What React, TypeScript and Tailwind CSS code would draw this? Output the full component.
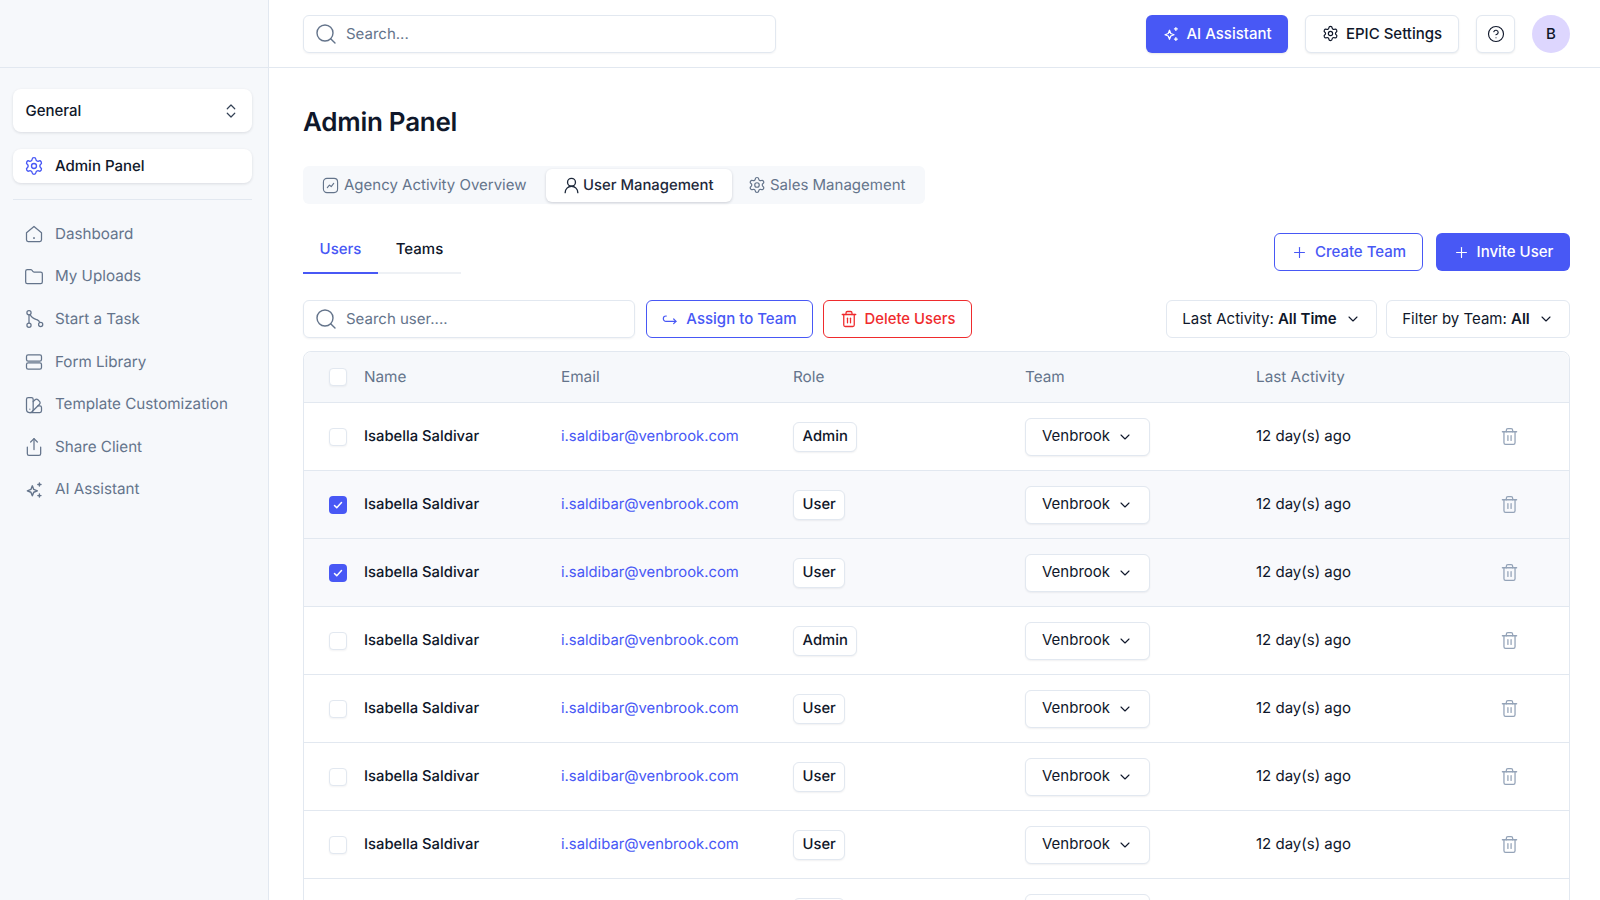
import React from "react";
import {
  ChevronDown,
  ChevronsUpDown,
  CircleHelp,
  Folder,
  Plus,
  Search,
  Settings,
  Share,
  SwatchBook,
  Trash2,
  UserRound,
} from "lucide-react";

type IconProps = { className?: string };

const Sparkle = ({ className }: IconProps) => (
  <svg className={className} viewBox="0 0 24 24" fill="none" stroke="currentColor" strokeWidth={1.7} strokeLinejoin="round" strokeLinecap="round">
    <path d="M10 7l1.700 4.300 4.300 1.700-4.300 1.700L10 19l-1.700-4.300L4 13l4.300-1.700z" />
    <path d="M18.500 3.500v3.700M16.600 5.300h3.800M18.500 16.800v3.700M16.600 18.700h3.800" />
  </svg>
);

const HomeIcon = ({ className }: IconProps) => (
  <svg className={className} viewBox="0 0 24 24" fill="none" stroke="currentColor" strokeWidth={1.5} strokeLinejoin="round" strokeLinecap="round">
    <path d="M3 10.500 12 3l9 7.500V19a2 2 0 0 1-2 2H5a2 2 0 0 1-2-2z" />
    <path d="M12 16.500v.5" strokeWidth={2} />
  </svg>
);

const TaskIcon = ({ className }: IconProps) => (
  <svg className={className} viewBox="0 0 24 24" fill="none" stroke="currentColor" strokeWidth={1.5} strokeLinecap="round">
    <circle cx="6" cy="4.500" r="2.500" />
    <circle cx="6" cy="19.500" r="2.500" />
    <circle cx="20" cy="18.500" r="2.500" />
    <path d="M6 7v10M7.500 7C9 11 13 12 15.500 12.800c1.500.6 2.800 1.700 3.300 3.300" />
  </svg>
);

const FormIcon = ({ className }: IconProps) => (
  <svg className={className} viewBox="0 0 24 24" fill="none" stroke="currentColor" strokeWidth={1.5} strokeLinejoin="round">
    <rect x="3" y="3.500" width="18" height="7.500" rx="2" />
    <rect x="3" y="13" width="18" height="7.500" rx="2" />
  </svg>
);

const ChartSquare = ({ className }: IconProps) => (
  <svg className={className} viewBox="0 0 24 24" fill="none" stroke="currentColor" strokeWidth={1.6} strokeLinecap="round" strokeLinejoin="round">
    <rect x="2" y="2" width="20" height="20" rx="5" />
    <path d="M7.500 15l3-3.500 2.500 2L16.500 9" />
  </svg>
);

const AssignIcon = ({ className }: IconProps) => (
  <svg className={className} viewBox="0 0 24 24" fill="none" stroke="currentColor" strokeWidth={1.8} strokeLinecap="round" strokeLinejoin="round">
    <path d="M6.500 7.500H6a3.500 3.500 0 0 0 0 8h15" />
    <path d="M17.500 12 21 15.500 17.500 19" />
  </svg>
);

const navItems = [
  { label: "Dashboard", icon: HomeIcon },
  { label: "My Uploads", icon: Folder },
  { label: "Start a Task", icon: TaskIcon },
  { label: "Form Library", icon: FormIcon },
  { label: "Template Customization", icon: SwatchBook },
  { label: "Share Client", icon: Share },
  { label: "AI Assistant", icon: Sparkle },
];

const users = [
  { role: "Admin", checked: false },
  { role: "User", checked: true },
  { role: "User", checked: true },
  { role: "Admin", checked: false },
  { role: "User", checked: false },
  { role: "User", checked: false },
  { role: "User", checked: false },
  { role: "User", checked: false },
];

const Checkbox = ({ checked }: { checked: boolean }) =>
  checked ? (
    <span className="flex h-[18px] w-[18px] items-center justify-center rounded-[4px] bg-[#4858f5]">
      <svg className="h-3 w-3 text-white" viewBox="0 0 24 24" fill="none" stroke="currentColor" strokeWidth={3} strokeLinecap="round" strokeLinejoin="round">
        <path d="M5 13l4.500 4.500L19 7" />
      </svg>
    </span>
  ) : (
    <span className="block h-[18px] w-[18px] rounded-[4px] border border-[#e2e8f0] bg-white shadow-[0_1px_2px_rgba(15,23,42,0.05)]" />
  );

const Sidebar = () => (
  <aside className="flex h-full w-[269px] shrink-0 flex-col border-r border-[#e2e8f0] bg-[#f6f8fb]">
    <div className="h-[68px] shrink-0 border-b border-[#e2e8f0]" />
    <div className="pl-[13px] pr-[16px] pt-[21px]">
      <button className="flex h-[43px] w-full items-center justify-between rounded-lg bg-white pl-[12.500px] pr-[12px] text-[15px] font-medium text-[#0f172a] shadow-[0_1px_3px_rgba(15,23,42,0.12)]">
        <span className="pt-[2px]">General</span>
        <ChevronsUpDown className="h-[18px] w-[18px] text-[#334155]" strokeWidth={1.6} />
      </button>
      <div className="mt-[17px] flex h-[34px] items-center gap-[11px] rounded-lg bg-white pl-[11px] text-[15px] font-medium text-[#0f172a] shadow-[0_1px_3px_rgba(15,23,42,0.12)]">
        <Settings className="h-[20px] w-[20px] text-[#4858f5]" strokeWidth={1.6} />
        Admin Panel
      </div>
      <div className="mt-4 border-t border-[#e2e8f0]" />
      <nav className="mt-[13px] flex flex-col">
        {navItems.map((item) => (
          <a key={item.label} className="flex h-[42.6px] items-center gap-[11px] pl-[11px] text-[15.2px] text-[#64748b]">
            <item.icon className="h-[20px] w-[20px] shrink-0" strokeWidth={1.5} />
            {item.label}
          </a>
        ))}
      </nav>
    </div>
  </aside>
);

const Header = () => (
  <header className="flex h-[68px] shrink-0 items-center justify-between border-b border-[#e2e8f0] pl-[34px] pr-[30px]">
    <div className="flex h-[38px] w-[473px] items-center gap-[8px] rounded-md border border-[#e2e8f0] pl-[10px] pr-[9px] text-[15px] text-[#64748b] shadow-[0_1px_2px_rgba(15,23,42,0.05)]">
      <Search className="h-[24px] w-[24px]" strokeWidth={1.4} />
      <span className="pt-[2px]">Search...</span>
    </div>
    <div className="flex items-center">
      <button className="flex h-[38px] w-[142px] items-center justify-center gap-[6px] rounded-md bg-[#4858f5] text-[15px] font-medium text-white shadow-[0_1px_2px_rgba(15,23,42,0.1)]">
        <Sparkle className="h-[18px] w-[18px]" />
        <span className="pt-[2px]">AI Assistant</span>
      </button>
      <button className="ml-[17px] flex h-[38px] w-[154px] items-center justify-center gap-[7px] rounded-md border border-[#e2e8f0] bg-white text-[15px] font-medium text-[#0f172a] shadow-[0_1px_2px_rgba(15,23,42,0.08)]">
        <Settings className="h-[17px] w-[17px]" strokeWidth={1.7} />
        <span className="pt-[2px]">EPIC Settings</span>
      </button>
      <button className="ml-[17px] flex h-[38px] w-[39px] items-center justify-center rounded-md border border-[#e2e8f0] bg-white text-[#0f172a] shadow-[0_1px_2px_rgba(15,23,42,0.08)]">
        <CircleHelp className="h-[18px] w-[18px]" strokeWidth={1.5} />
      </button>
      <div className="ml-[17px] flex h-[38px] w-[38px] items-center justify-center rounded-full bg-[#ddd6fe] pt-[2px] text-[15px] font-medium text-[#0f172a]">
        B
      </div>
    </div>
  </header>
);

const TopTabs = () => (
  <div className="mt-[27px] flex h-[38px] w-[622px] items-center gap-[3px] rounded-md bg-[#f6f8fb] px-[3px]">
    <div className="flex h-full w-[237px] flex-none items-center gap-[5px] pl-4 text-[15px] text-[#64748b]">
      <ChartSquare className="h-[17px] w-[17px]" />
      Agency Activity Overview
    </div>
    <div className="flex h-[33px] w-[186px] flex-none items-center gap-[2px] rounded-md bg-white pl-4 text-[14.85px] font-medium text-[#1e293b] shadow-[0_1px_3px_rgba(15,23,42,0.18)]">
      <UserRound className="h-[19px] w-[19px]" strokeWidth={1.7} />
      User Management
    </div>
    <div className="flex h-full flex-none items-center gap-[4px] pl-[13px] text-[15px] text-[#64748b]">
      <Settings className="h-[18px] w-[18px]" strokeWidth={1.6} />
      Sales Management
    </div>
  </div>
);

const Toolbar = () => (
  <>
    <div className="mt-[29px] flex items-start justify-between">
      <div className="flex w-[158px] border-b-2 border-[#eef1f5] text-[15px] font-medium">
        <div className="-mb-[2px] flex h-[41px] w-[75px] items-start justify-center border-b-2 border-[#4858f5] pt-[5px] text-[#4858f5]">Users</div>
        <div className="flex h-[39px] w-[83px] items-start justify-center pt-[5px] text-[#0f172a]">Teams</div>
      </div>
      <div className="flex gap-[13px]">
        <button className="flex h-[38px] w-[149px] items-center justify-center gap-[7px] rounded-md border border-[#4858f5] bg-white text-[15px] font-medium text-[#4858f5]">
          <Plus className="h-[17px] w-[17px]" strokeWidth={1.6} />
          Create Team
        </button>
        <button className="flex h-[38px] w-[134px] items-center justify-center gap-[7px] rounded-md bg-[#4858f5] text-[15px] font-medium text-white">
          <Plus className="h-[17px] w-[17px]" strokeWidth={1.6} />
          Invite User
        </button>
      </div>
    </div>
    <div className="mt-[26px] flex items-center justify-between">
      <div className="flex items-center">
        <div className="flex h-[38px] w-[332px] items-center gap-[8px] rounded-md border border-[#e2e8f0] pl-[10px] pr-[9px] text-[15px] text-[#64748b] shadow-[0_1px_2px_rgba(15,23,42,0.05)]">
          <Search className="h-[24px] w-[24px]" strokeWidth={1.4} />
          Search user....
        </div>
        <button className="ml-[11px] flex h-[38px] w-[167px] items-center justify-center gap-2 rounded-md border border-[#4858f5] bg-white text-[15px] font-medium text-[#4858f5]">
          <AssignIcon className="h-4 w-4" />
          Assign to Team
        </button>
        <button className="ml-[10px] flex h-[38px] w-[149px] items-center justify-center gap-[7px] rounded-md border border-[#ef2b2d] bg-white text-[14.85px] font-medium text-[#ef2b2d]">
          <Trash2 className="h-[18px] w-[18px]" strokeWidth={1.7} />
          Delete Users
        </button>
      </div>
      <div className="flex items-center gap-[9px]">
        <button className="flex h-[38px] w-[211px] items-center justify-center gap-[8px] rounded-md border border-[#e2e8f0] bg-white text-[15px] text-[#0f172a]">
          <span>
            Last Activity: <b className="font-semibold">All Time</b>
          </span>
          <ChevronDown className="h-4 w-4" strokeWidth={1.6} />
        </button>
        <button className="flex h-[38px] w-[184px] items-center justify-center gap-[8px] rounded-md border border-[#e2e8f0] bg-white text-[15px] text-[#0f172a]">
          <span>
            Filter by Team: <b className="font-semibold">All</b>
          </span>
          <ChevronDown className="h-4 w-4" strokeWidth={1.6} />
        </button>
      </div>
    </div>
  </>
);

const UserTable = () => (
  <div className="mt-[13px] rounded-t-lg border border-[#e2e8f0]">
    <div className="grid h-[50px] grid-cols-[60px_197px_232px_232px_231px_1fr] items-center rounded-t-lg bg-[#f6f8fb] text-[15.3px] text-[#64748b]">
      <div className="flex justify-center pl-[8px]">
        <Checkbox checked={false} />
      </div>
      <div>Name</div>
      <div>Email</div>
      <div>Role</div>
      <div>Team</div>
      <div>Last Activity</div>
    </div>
    {users.map((user, idx) => (
      <div
        key={idx}
        className={`grid h-[68px] grid-cols-[60px_197px_232px_232px_231px_1fr] items-center border-t border-[#e2e8f0] text-[15px] text-[#0f172a] ${
          user.checked ? "bg-[#f8f9fc]" : "bg-white"
        }`}
      >
        <div className="flex justify-center pl-[8px]">
          <Checkbox checked={user.checked} />
        </div>
        <div className="text-[14.8px] font-medium">Isabella Saldivar</div>
        <div className="text-[14.8px] text-[#4858f5]">i.saldibar@venbrook.com</div>
        <div>
          <span className="inline-flex h-[30px] items-center rounded-md border border-[#e2e8f0] bg-white px-[8.5px] text-[14.8px] font-medium shadow-[0_1px_2px_rgba(15,23,42,0.06)]">
            {user.role}
          </span>
        </div>
        <div>
          <button className="flex h-[38px] w-[125px] items-center gap-[7px] rounded-md border border-[#e2e8f0] bg-white pl-4 shadow-[0_1px_2px_rgba(15,23,42,0.06)]">
            Venbrook
            <ChevronDown className="h-4 w-4" strokeWidth={1.6} />
          </button>
        </div>
        <div className="flex items-center justify-between pr-[50px]">
          <span>12 day(s) ago</span>
          <Trash2 className="h-[19px] w-[19px] text-[#94a3b8]" strokeWidth={1.6} />
        </div>
      </div>
    ))}
  </div>
);

export default function App() {
  return (
    <div className="flex h-[900px] w-[1600px] overflow-hidden bg-white font-['Inter',sans-serif] [text-rendering:geometricPrecision]">
      <Sidebar />
      <main className="flex min-w-0 flex-1 flex-col">
        <Header />
        <div className="pl-[34px] pr-[30px]">
          <h1 className="mt-[39px] text-[26px] leading-[32px] font-semibold tracking-[-0.01em] text-[#0f172a]">Admin Panel</h1>
          <TopTabs />
          <Toolbar />
          <UserTable />
        </div>
      </main>
    </div>
  );
}
